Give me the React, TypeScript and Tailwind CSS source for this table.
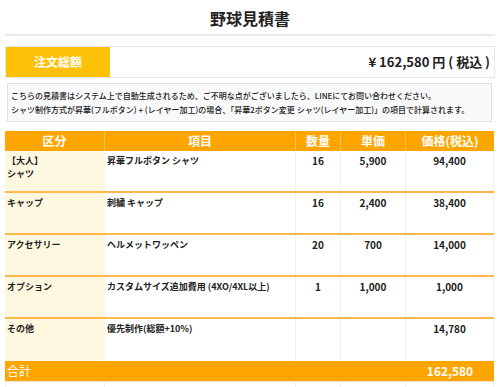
import React from "react";

const rows = [
  { cat: ["【大人】", "シャツ"], item: "昇華フルボタン シャツ", qty: "16", unit: "5,900", price: "94,400" },
  { cat: ["キャップ"], item: "刺繍 キャップ", qty: "16", unit: "2,400", price: "38,400" },
  { cat: ["アクセサリー"], item: "ヘルメットワッペン", qty: "20", unit: "700", price: "14,000" },
  { cat: ["オプション"], item: "カスタムサイズ追加費用 (4XO/4XL以上)", qty: "1", unit: "1,000", price: "1,000" },
  { cat: ["その他"], item: "優先制作(総額+10%)", qty: "", unit: "", price: "14,780" },
];

const cols = "grid grid-cols-[100px_191px_45px_65px_88px]";

export default function App() {
  return (
    <div
      className="w-[500px] h-[387px] overflow-hidden bg-white text-[#222]"
      style={{ fontFamily: '"Noto Sans CJK JP", "Noto Sans", sans-serif' }}
    >
      <div className="mx-[5px] h-[36px] border-b-2 border-[#e6ebf1] flex items-center justify-center">
        <h1 className="text-[16px] font-bold leading-none mt-[1px]">野球見積書</h1>
      </div>

      <div className="mx-[5px] mt-[10px] h-[32px] flex border border-[#e3e7ec]">
        <div className="w-[104px] bg-[#FFC107] flex items-center justify-center text-white text-[12px] font-bold">
          注文総額
        </div>
        <div className="flex-1 flex items-center justify-end pr-[4px] text-[13px] font-bold">
          ¥ 162,580 円 ( 税込 )
        </div>
      </div>

      <div className="ml-[7px] mr-[8px] mt-[5px] h-[39px] bg-[#f8f9fa] border border-[#dde1e5] px-[3px] pt-[5px] text-[8px] leading-[14px] font-medium">
        <p>こちらの見積書はシステム上で自動生成されるため、ご不明な点がございましたら、LINEにてお問い合わせください。</p>
        <p>シャツ制作方式が昇華(フルボタン) + (レイヤー加工)の場合、「昇華2ボタン変更 シャツ(レイヤー加工)」の項目で計算されます。</p>
      </div>

      <div className="mx-[5px] mt-[9px] w-[489px]">
        <div className={`${cols} h-[20px] bg-[#FFA500] text-white text-[12px] font-bold`}>
          <div className="flex items-center justify-center border-r border-[#ffc560]">区分</div>
          <div className="flex items-center justify-center border-r border-[#ffc560]">項目</div>
          <div className="flex items-center justify-center border-r border-[#ffc560]">数量</div>
          <div className="flex items-center justify-center border-r border-[#ffc560]">単価</div>
          <div className="flex items-center justify-center">価格(税込)</div>
        </div>
        {rows.map((r, i) => (
          <div
            key={i}
            className={`${cols} h-[42px] text-[9px] font-bold leading-[13px] ${i < rows.length - 1 ? "border-b-2 border-[#FFB94A]" : ""}`}
          >
            <div className="bg-[#FFF8E0] pl-[2px] pt-[3px]">
              {r.cat.map((c, j) => (
                <div key={j}>{c}</div>
              ))}
            </div>
            <div className="pl-[2px] pt-[3px] border-r border-[#eef0f2]">{r.item}</div>
            <div className="text-center text-[10px] pt-[3px] border-r border-[#eef0f2]">{r.qty}</div>
            <div className="text-center text-[10px] pt-[3px] border-r border-[#eef0f2]">{r.unit}</div>
            <div className="text-center text-[10px] pt-[3px] border-r border-[#eef0f2]">{r.price}</div>
          </div>
        ))}
        <div className={`${cols} h-[21px] bg-[#FFA500] text-white text-[12px] border-b border-[#f0e6d0]`}>
          <div className="col-span-4 flex items-center pl-[2px]">合計</div>
          <div className="flex items-center justify-center font-bold">162,580</div>
        </div>
        <div className={`${cols} h-[20px]`}>
          <div className="border-x border-[#eef0f2]"></div>
          <div className="border-r border-[#eef0f2]"></div>
          <div className="border-r border-[#eef0f2]"></div>
          <div className="border-r border-[#eef0f2]"></div>
          <div className="border-r border-[#eef0f2]"></div>
        </div>
      </div>
    </div>
  );
}
